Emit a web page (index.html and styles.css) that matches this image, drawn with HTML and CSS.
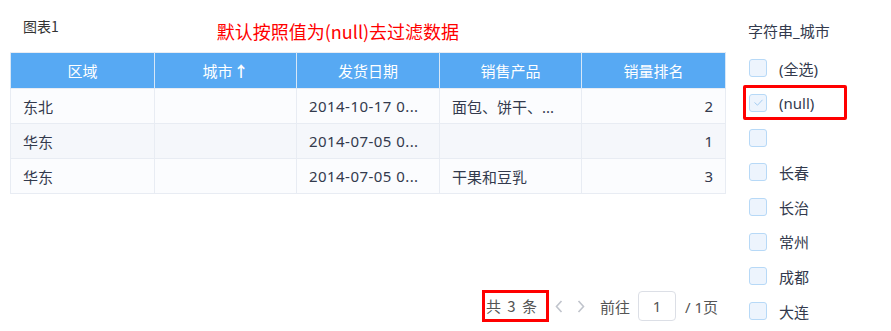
FILE: index.html
```html
<!DOCTYPE html>
<html lang="zh">
<head>
<meta charset="utf-8">
<link rel="stylesheet" href="styles.css">
</head>
<body>
<div class="page">
  <div class="main">
    <div class="titles">
      <div class="chart-name">图表1</div>
      <div class="note">默认按照值为(null)去过滤数据</div>
    </div>
    <table class="grid">
      <colgroup>
        <col class="c1"><col class="c2"><col class="c3"><col class="c4"><col class="c5">
      </colgroup>
      <thead>
        <tr>
          <th>区域</th>
          <th>城市<span class="arrow">&#8593;</span></th>
          <th>发货日期</th>
          <th>销售产品</th>
          <th>销量排名</th>
        </tr>
      </thead>
      <tbody>
        <tr class="odd">
          <td>东北</td><td></td><td class="date">2014-10-17 0...</td><td>面包、饼干、...</td><td class="num">2</td>
        </tr>
        <tr class="even">
          <td>华东</td><td></td><td class="date">2014-07-05 0...</td><td></td><td class="num">1</td>
        </tr>
        <tr class="odd">
          <td>华东</td><td></td><td class="date">2014-07-05 0...</td><td>干果和豆乳</td><td class="num">3</td>
        </tr>
      </tbody>
    </table>
    <div class="pager">
      <span class="total">共 3 条</span>
      <svg class="nav prev" width="8" height="13" viewBox="0 0 8 13"><path d="M6.5 1 L1.5 6.5 L6.5 12" fill="none" stroke="#c0c4cc" stroke-width="1.6"/></svg>
      <svg class="nav next" width="8" height="13" viewBox="0 0 8 13"><path d="M1.5 1 L6.5 6.5 L1.5 12" fill="none" stroke="#c0c4cc" stroke-width="1.6"/></svg>
      <span class="goto">前往</span>
      <span class="pagebox">1</span>
      <span class="pages">/ 1页</span>
    </div>
  </div>
  <div class="side">
    <div class="side-title">字符串_城市</div>
    <ul class="opts">
      <li><span class="box"></span><span class="lbl">(全选)</span></li>
      <li class="marked"><span class="box"><svg width="11" height="9" viewBox="0 0 11 9"><path d="M1.5 4.5 L4.5 7.2 L9.5 1.8" fill="none" stroke="#a6cdf2" stroke-width="1"/></svg></span><span class="lbl">(null)</span></li>
      <li><span class="box"></span><span class="lbl"></span></li>
      <li><span class="box"></span><span class="lbl">长春</span></li>
      <li><span class="box"></span><span class="lbl">长治</span></li>
      <li><span class="box"></span><span class="lbl">常州</span></li>
      <li><span class="box"></span><span class="lbl">成都</span></li>
      <li><span class="box"></span><span class="lbl">大连</span></li>
    </ul>
  </div>
</div>
</body>
</html>
```
FILE: styles.css
```css
html, body {
  margin: 0;
  padding: 0;
  background: #fff;
  overflow: hidden;
}
body {
  font-family: "Noto Sans", "Noto Sans CJK SC", sans-serif;
  font-size: 15px;
  color: #333a4d;
}
.page {
  display: flex;
  width: 891px;
  height: 331px;
}
.main {
  width: 715px;
  padding-left: 10px;
  display: flex;
  flex-direction: column;
}
.titles {
  height: 52px;
  display: flex;
  align-items: flex-start;
}
.chart-name {
  margin-left: 13px;
  margin-top: 16px;
  font-family: "Noto Sans CJK SC", sans-serif;
  font-size: 14px;
  line-height: 20px;
  color: #333;
}
.note {
  margin-left: 158px;
  margin-top: 18px;
  font-family: "Noto Sans CJK SC", sans-serif;
  font-size: 18px;
  line-height: 26px;
  color: #ff0000;
}
.grid {
  width: 715px;
  table-layout: fixed;
  border-collapse: collapse;
  border: 1px solid #e8ecf3;
}
.grid .c1 { width: 144px; }
.grid .c2 { width: 142px; }
.grid .c3 { width: 143px; }
.grid .c4 { width: 142px; }
.grid .c5 { width: 144px; }
.grid th {
  height: 35px;
  padding: 0;
  background: #57a9f3;
  color: #fff;
  font-weight: normal;
  font-size: 15px;
  text-align: center;
  border-left: 1px solid #d7e7f7;
  border-right: 1px solid #d7e7f7;
  border-top: 1px solid #e8ecf3;
}
.grid .arrow {
  margin-left: 1px;
  font-weight: bold;
}
.grid td {
  height: 34px;
  padding: 0 12px;
  border: 1px solid #e8ecf3;
  white-space: nowrap;
  overflow: hidden;
  color: #333a4d;
}
.grid td.date { letter-spacing: 0.45px; }
.grid tr.odd td { background: #fbfcfe; }
.grid tr.even td { background: #f5f7fb; }
.grid td.num { text-align: right; padding-right: 12px; }
.pager {
  margin-top: auto;
  margin-bottom: 9px;
  display: flex;
  align-items: center;
  justify-content: flex-end;
  padding-right: 7px;
  height: 32px;
  font-size: 15px;
  color: #555;
}
.total {
  border: 3px solid #ff0000;
  padding: 0 9px 0 1px;
  height: 26px;
  line-height: 26px;
  word-spacing: 3px;
  color: #555;
  font-family: "Noto Sans CJK SC", sans-serif;
}
.nav {
  display: block;
}
.prev {
  margin-left: 6px;
}
.next {
  margin-left: 14px;
}
.goto {
  margin-left: 15px;
  margin-right: 8px;
}
.pagebox {
  width: 36px;
  height: 28px;
  border: 1px solid #dcdfe6;
  border-radius: 4px;
  text-align: center;
  line-height: 28px;
  color: #555;
}
.pages {
  margin-left: 9px;
}
.side {
  margin-left: 18px;
  flex: 1;
}
.side-title {
  margin-top: 21px;
  margin-left: 5px;
  font-size: 15px;
  line-height: 21px;
  color: #333a4d;
}
.opts {
  list-style: none;
  margin: 9px 0 0 0;
  padding: 0;
}
.opts li {
  height: 35px;
  display: flex;
  align-items: center;
  padding-left: 3px;
  box-sizing: border-box;
  border: 3px solid transparent;
  width: 104px;
  margin-top: -0.3px;
}
.opts li.marked {
  border-color: #ff0000;
  border-radius: 2px;
}
.box {
  width: 16px;
  height: 16px;
  border: 1px solid #b7d9f7;
  background: #edf4fd;
  border-radius: 3px;
  display: flex;
  align-items: center;
  justify-content: center;
  flex-shrink: 0;
}
.lbl {
  margin-left: 12px;
  color: #333a4d;
}
```
